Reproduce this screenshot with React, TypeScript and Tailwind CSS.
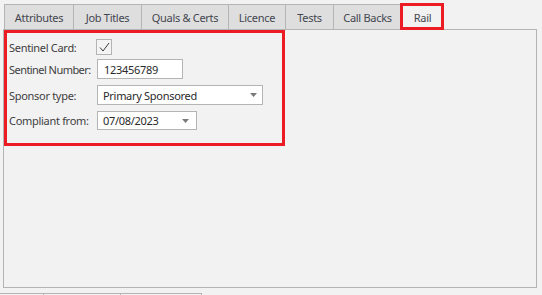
import React from "react";

const tabs = [
  { label: "Attributes", w: "w-[69px]" },
  { label: "Job Titles", w: "w-[68px]" },
  { label: "Quals & Certs", w: "w-[87px]" },
  { label: "Licence", w: "w-[57px]" },
  { label: "Tests", w: "w-[48px]" },
  { label: "Call Backs", w: "w-[68px]" },
];

function Arrow() {
  return (
    <svg width="7" height="4" viewBox="0 0 7 4" className="shrink-0">
      <path d="M0 0 L7 0 L3.5 4 Z" fill="#7a7a7a" />
    </svg>
  );
}

export default function App() {
  return (
    <div className="w-[542px] h-[295px] overflow-hidden bg-[#f2f2f2] font-['Noto_Sans',sans-serif] text-[11px] tracking-[-0.3px] text-[#404040] leading-none whitespace-nowrap">
      <div className="flex pt-[4px] pl-[4px]">
        {tabs.map((t) => (
          <div
            key={t.label}
            className={`${t.w} h-[25px] border-t border-l border-[#b4b4b4] bg-[#dedede] flex items-center justify-center text-[#44464f]`}
          >
            {t.label}
          </div>
        ))}
        <div className="relative w-[43px] h-[26px] -mb-px z-10 border-t border-l border-r border-[#b4b4b4] bg-[#f2f2f2] flex items-center justify-center pb-px text-[#44464f]">
          Rail
          <div className="absolute -left-[2px] -top-[2px] -right-px bottom-0 border-[3px] border-[#ec1c24]" />
        </div>
      </div>
      <div className="ml-[3px] w-[534px] h-[259px] border border-[#b4b4b4]">
        <div className="w-[281px] h-[116px] border-[3px] border-[#ec1c24] pl-[2px] flex flex-col">
          <div className="flex items-center h-[16px] mt-[6px]">
            <div className="w-[87px]">Sentinel Card:</div>
            <div className="w-[16px] h-[16px] border border-[#b4b4b4] bg-[#f4f4f4] flex items-center justify-center">
              <svg width="14" height="14" viewBox="0 0 14 14">
                <path d="M3 7.5 L6 11 L12 3" fill="none" stroke="#3a3a3a" strokeWidth="1" />
              </svg>
            </div>
          </div>
          <div className="flex items-center h-[20px] mt-[4px]">
            <div className="w-[88px] tracking-[-0.55px]">Sentinel Number:</div>
            <div className="w-[86px] h-[20px] bg-white border border-[#b4b4b4] flex items-center pl-[6px] text-[#2a2a2a] tracking-[-0.3px]">
              123456789
            </div>
          </div>
          <div className="flex items-center h-[20px] mt-[6px]">
            <div className="w-[88px]">Sponsor type:</div>
            <div className="w-[166px] h-[20px] bg-white border border-[#b4b4b4] flex items-center justify-between pl-[5px] pr-[5px] text-[#2a2a2a]">
              <span>Primary Sponsored</span>
              <Arrow />
            </div>
          </div>
          <div className="flex items-center h-[19px] mt-[6px]">
            <div className="w-[88px]">Compliant from:</div>
            <div className="w-[100px] h-[19px] bg-white border border-[#b4b4b4] flex items-center justify-between pl-[5px] pr-[7px] text-[#2a2a2a]">
              <span>07/08/2023</span>
              <Arrow />
            </div>
          </div>
        </div>
      </div>
      <div className="flex mt-[5px]">
        <div className="w-[44px] h-[20px] border-t border-r border-[#b4b4b4]" />
        <div className="w-[77px] h-[20px] border-t border-r border-[#b4b4b4]" />
        <div className="w-[81px] h-[20px] border-t border-r border-[#b4b4b4]" />
      </div>
    </div>
  );
}
